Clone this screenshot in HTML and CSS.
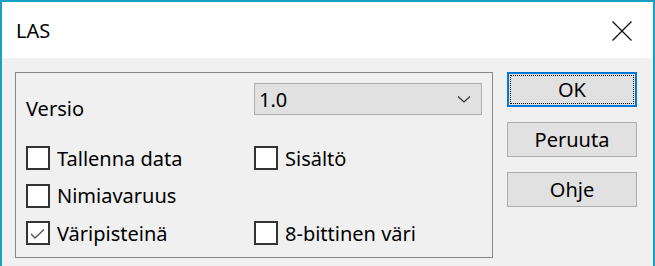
FILE: index.html
```html
<!DOCTYPE html>
<html>
<head>
<meta charset="utf-8">
<link rel="stylesheet" href="styles.css">
</head>
<body>
<div class="window">
  <div class="titlebar">
    <span class="title">LAS</span>
    <svg class="close" width="20" height="20" viewBox="0 0 20 20"><path d="M0.5 0.5 L19.5 19.5 M19.5 0.5 L0.5 19.5" stroke="#111" stroke-width="1.3" fill="none"/></svg>
  </div>
  <div class="content">
    <div class="group">
      <div class="version-row">
        <span class="label">Versio</span>
        <div class="combo">
          <span class="combo-text">1.0</span>
          <svg class="chevron" width="14" height="8" viewBox="0 0 14 8"><path d="M1 1.5 L7 7 L13 1.5" stroke="#333" stroke-width="1.2" fill="none"/></svg>
        </div>
      </div>
      <div class="checks">
        <label class="check"><span class="box"></span><span>Tallenna data</span></label>
        <label class="check"><span class="box"></span><span>Sisältö</span></label>
        <label class="check"><span class="box"></span><span>Nimiavaruus</span></label>
        <span class="empty"></span>
        <label class="check"><span class="box"><svg width="20" height="20" viewBox="0 0 20 20"><path d="M3 11 L7 15 L16 6.5" stroke="#555" stroke-width="1.3" fill="none"/></svg></span><span>Väripisteinä</span></label>
        <label class="check"><span class="box"></span><span>8-bittinen väri</span></label>
      </div>
    </div>
    <div class="buttons">
      <div class="btn default"><span class="focus">OK</span></div>
      <div class="btn">Peruuta</div>
      <div class="btn">Ohje</div>
    </div>
  </div>
</div>
</body>
</html>
```
FILE: styles.css
```css
html, body {
  margin: 0;
  padding: 0;
  background: #f0f0f0;
}
body {
  font-family: "Noto Sans", "DejaVu Sans", sans-serif;
  font-size: 20px;
  line-height: 27px;
  color: #000;
}
.window {
  width: 655px;
  height: 266px;
  box-sizing: border-box;
  border: 2px solid #18a0c4;
  border-bottom: none;
  background: #f0f0f0;
  overflow: hidden;
}
.titlebar {
  height: 56px;
  background: #fff;
  display: flex;
  align-items: center;
  justify-content: space-between;
  padding: 0 21px 0 14px;
}
.title {
  font-size: 20px;
}
.close {
  display: block;
  margin-top: 1px;
}
.content {
  display: flex;
  align-items: flex-start;
  padding: 14px 0 0 13px;
}
.group {
  width: 478px;
  height: 186px;
  box-sizing: border-box;
  border: 1px solid #868686;
  padding: 10px 0 0 10px;
}
.version-row {
  display: flex;
  align-items: flex-start;
}
.label {
  width: 228px;
  padding-top: 12px;
}
.combo {
  width: 228px;
  height: 32px;
  box-sizing: border-box;
  border: 1px solid #adadad;
  background: #e1e1e1;
  display: flex;
  align-items: center;
  justify-content: space-between;
  padding: 0 10px 0 4px;
}
.chevron {
  display: block;
}
.checks {
  display: grid;
  grid-template-columns: 228px 228px;
  grid-auto-rows: 24px;
  row-gap: 13.5px;
  margin-top: 24px;
}
.check {
  display: flex;
  align-items: center;
  gap: 7px;
}
.box {
  width: 24px;
  height: 24px;
  box-sizing: border-box;
  border: 2px solid #333;
  background: #fff;
  flex: none;
}
.box svg {
  display: block;
}
.buttons {
  display: flex;
  flex-direction: column;
  gap: 15px;
  margin-left: 14px;
}
.btn {
  width: 130px;
  height: 35px;
  box-sizing: border-box;
  border: 1px solid #adadad;
  background: #e1e1e1;
  display: flex;
  align-items: center;
  justify-content: center;
}
.btn.default {
  border: 2px solid #0078d7;
  padding: 1px;
}
.focus {
  flex: 1;
  align-self: stretch;
  display: flex;
  align-items: center;
  justify-content: center;
  border: 1px dotted #000;
}
```
